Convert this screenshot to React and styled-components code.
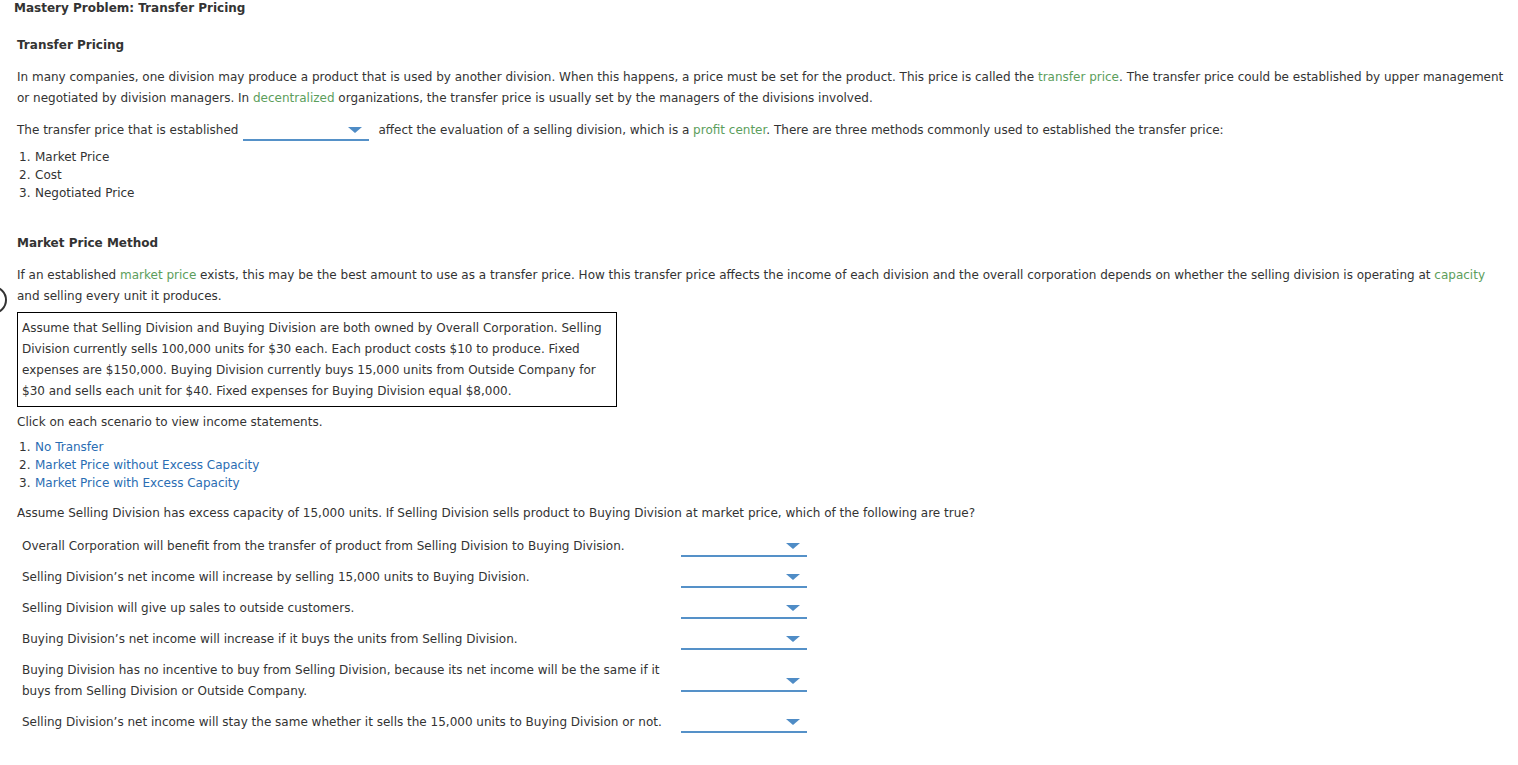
import React from 'react';
import styled, { createGlobalStyle } from 'styled-components';

const GlobalStyle = createGlobalStyle`
  body {
    margin: 0;
    background: #fff;
    font-family: "DejaVu Sans", Verdana, sans-serif;
    font-size: 12px;
    color: #333;
  }
`;

const Page = styled.div`
  position: relative;
  width: 1518px;
  min-height: 765px;
`;

const Title = styled.h1`
  margin: 0;
  padding: 1px 0 0 14px;
  font-size: 12px;
  line-height: 14px;
  font-weight: bold;
  color: #333;
`;

const Content = styled.div`
  padding: 0 8px 0 17px;
`;

const Heading = styled.h2`
  margin: ${p => p.top}px 0 0;
  font-size: 12px;
  line-height: 18px;
  font-weight: bold;
  color: #333;
`;

const Para = styled.p`
  margin: ${p => p.top}px 0 0;
  line-height: 21px;
`;

const Term = styled.span`
  color: #5c9e5c;
`;

const Numbered = styled.ol`
  list-style: none;
  margin: ${p => p.top}px 0 0;
  padding: 0 0 0 2px;
  line-height: 18px;
`;

const Num = styled.span`
  display: inline-block;
  width: 16px;
`;

const LinkText = styled.a`
  color: #2a6db3;
  text-decoration: none;
  cursor: pointer;
`;

const Dropdown = styled.span`
  position: relative;
  display: inline-block;
  vertical-align: middle;
  width: 126px;
  height: 19px;
  margin: ${p => (p.inline ? '0 9px 0 5px' : '0')};
  border-bottom: 2px solid #5591c8;

  &::after {
    content: '';
    position: absolute;
    right: 7px;
    top: 7px;
    border-left: 7px solid transparent;
    border-right: 7px solid transparent;
    border-top: 6px solid #4f8cc6;
  }
`;

const ScenarioBox = styled.div`
  margin-top: 5px;
  width: 600px;
  box-sizing: border-box;
  border: 1px solid #000;
  padding: 5px 8px 4px 4px;
  line-height: 21px;
`;

const Questions = styled.div`
  margin-top: 7px;
  display: grid;
  grid-template-columns: 664px 126px;
  align-items: center;
`;

const QText = styled.div`
  padding: 5px 0 5px 5px;
  line-height: 21px;
`;

const Edge = styled.div`
  position: absolute;
  left: -21px;
  top: 286px;
  width: 24px;
  height: 24px;
  border: 2px solid #333;
  border-radius: 50%;
`;

const questions = [
  'Overall Corporation will benefit from the transfer of product from Selling Division to Buying Division.',
  'Selling Division\u2019s net income will increase by selling 15,000 units to Buying Division.',
  'Selling Division will give up sales to outside customers.',
  'Buying Division\u2019s net income will increase if it buys the units from Selling Division.',
  'Buying Division has no incentive to buy from Selling Division, because its net income will be the same if it buys from Selling Division or Outside Company.',
  'Selling Division\u2019s net income will stay the same whether it sells the 15,000 units to Buying Division or not.',
];

export default function App() {
  return (
    <Page>
      <GlobalStyle />
      <Edge />
      <Title>Mastery Problem: Transfer Pricing</Title>
      <Content>
        <Heading top={21}>Transfer Pricing</Heading>
        <Para top={13}>
          In many companies, one division may produce a product that is used by another division. When this happens, a price must be set for the product. This price is called the <Term>transfer price</Term>. The transfer price could be established by upper management or negotiated by division managers. In <Term>decentralized</Term> organizations, the transfer price is usually set by the managers of the divisions involved.
        </Para>
        <Para top={11}>
          The transfer price that is established
          <Dropdown inline />
          affect the evaluation of a selling division, which is a <Term>profit center</Term>. There are three methods commonly used to established the transfer price:
        </Para>
        <Numbered top={7}>
          <li><Num>1.</Num>Market Price</li>
          <li><Num>2.</Num>Cost</li>
          <li><Num>3.</Num>Negotiated Price</li>
        </Numbered>

        <Heading top={32}>Market Price Method</Heading>
        <Para top={13}>
          If an established <Term>market price</Term> exists, this may be the best amount to use as a transfer price. How this transfer price affects the income of each division and the overall corporation depends on whether the selling division is operating at <Term>capacity</Term> and selling every unit it produces.
        </Para>
        <ScenarioBox>
          Assume that Selling Division and Buying Division are both owned by Overall Corporation. Selling Division currently sells 100,000 units for $30 each. Each product costs $10 to produce. Fixed expenses are $150,000. Buying Division currently buys 15,000 units from Outside Company for $30 and sells each unit for $40. Fixed expenses for Buying Division equal $8,000.
        </ScenarioBox>
        <Para top={5}>Click on each scenario to view income statements.</Para>
        <Numbered top={5}>
          <li><Num>1.</Num><LinkText>No Transfer</LinkText></li>
          <li><Num>2.</Num><LinkText>Market Price without Excess Capacity</LinkText></li>
          <li><Num>3.</Num><LinkText>Market Price with Excess Capacity</LinkText></li>
        </Numbered>
        <Para top={11}>
          Assume Selling Division has excess capacity of 15,000 units. If Selling Division sells product to Buying Division at market price, which of the following are true?
        </Para>
        <Questions>
          {questions.map((q, i) => (
            <React.Fragment key={i}>
              <QText>{q}</QText>
              <Dropdown />
            </React.Fragment>
          ))}
        </Questions>
      </Content>
    </Page>
  );
}
